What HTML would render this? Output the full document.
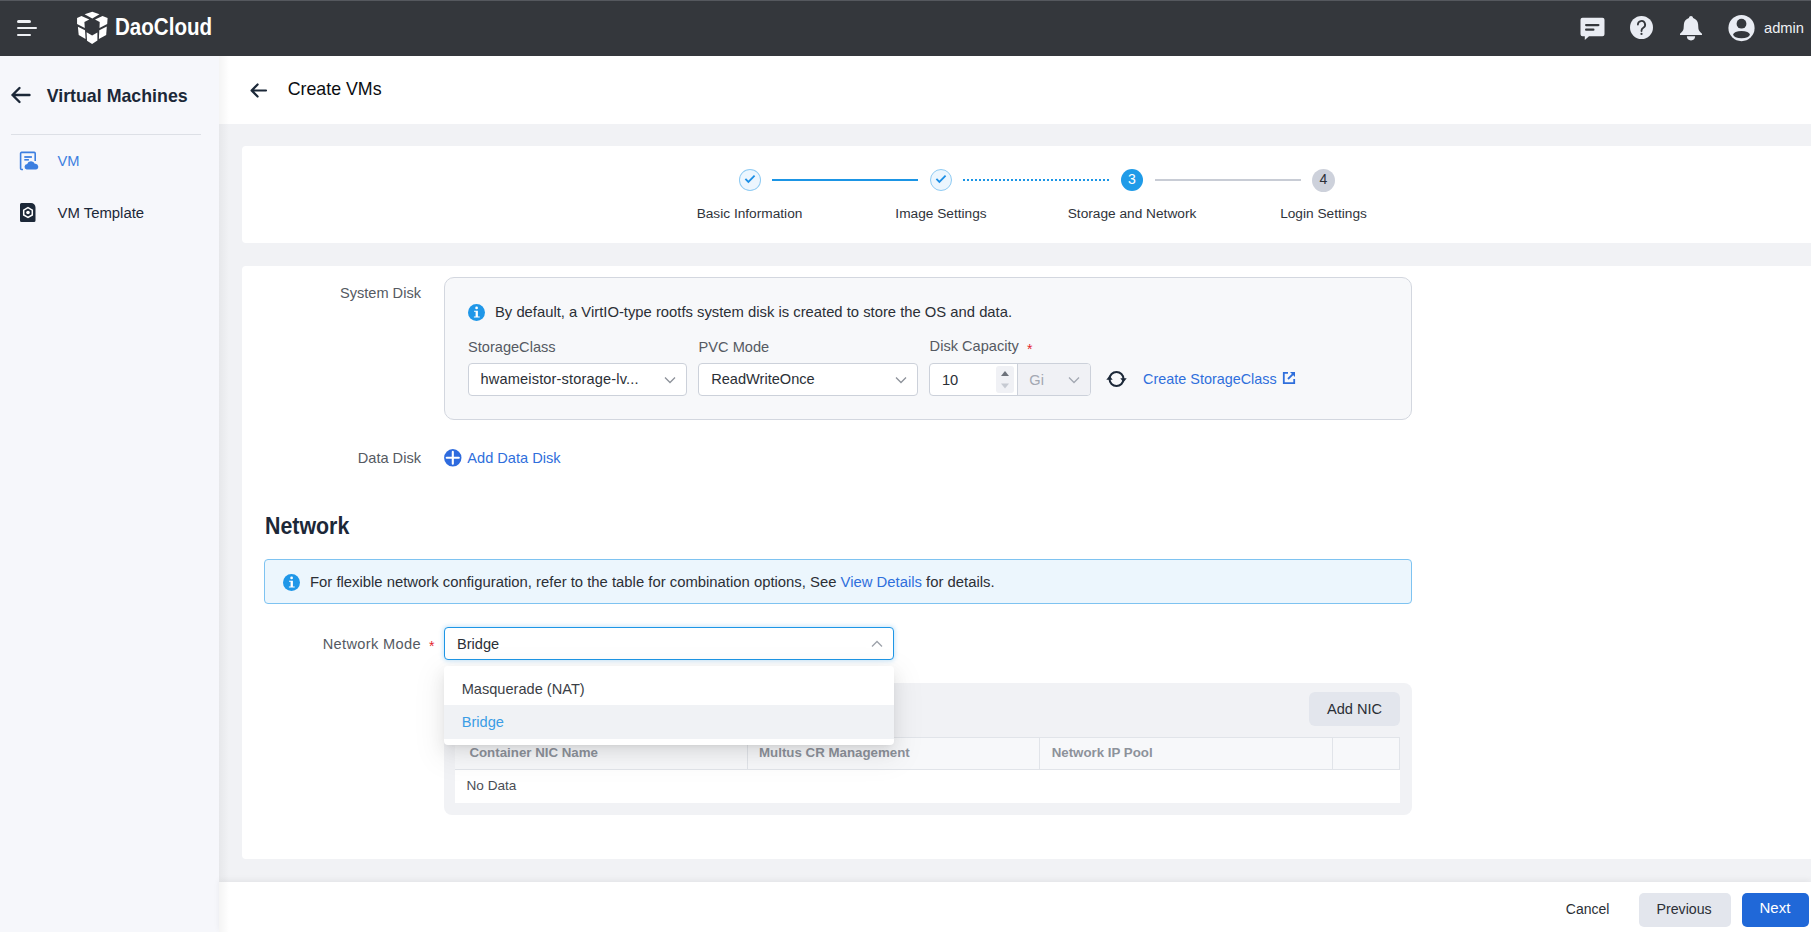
<!DOCTYPE html>
<html><head><meta charset="utf-8">
<style>
*{box-sizing:border-box;margin:0;padding:0}
html,body{width:1811px;height:932px;overflow:hidden;background:#f1f2f5;font-family:"Liberation Sans",sans-serif;}
.a{position:absolute}
.t{position:absolute;white-space:nowrap;line-height:1}
#hdr{left:0;top:0;width:1811px;height:56px;background:#34373c;border-top:1px solid #55585e}
#side{left:0;top:56px;width:219px;height:876px;background:#f6f7fb}
#sideshadow{left:219px;top:56px;width:10px;height:876px;background:linear-gradient(90deg,rgba(0,0,0,0.045),rgba(0,0,0,0))}
#phdr{left:219px;top:56px;width:1592px;height:68px;background:#fff}
.card{position:absolute;background:#fff;border-radius:4px}
</style></head><body>
<!-- header -->
<div id="hdr" class="a"></div>
<div class="a" style="left:17px;top:20px;width:14px;height:3px;border-radius:2px;background:#eef0f4"></div>
<div class="a" style="left:17px;top:27px;width:20px;height:2px;border-radius:1px;background:#eef0f4"></div>
<div class="a" style="left:17px;top:34px;width:14px;height:2px;border-radius:1px;background:#eef0f4"></div>
<svg class="a" style="left:74px;top:9px" width="38" height="38" viewBox="0 0 38 38">
  <g fill="#fff">
    <polygon points="18.3,2.65 25.5,5.3 18.3,9.4 10.6,5.3"/>
    <polygon points="3.06,8.97 7.5,6.9 15.3,10.4 10.4,13 10.8,19 3.06,15.1"/>
    <polygon points="33.6,9 28.5,6.9 21,10.4 25.7,13 25.5,19 33.2,15.1"/>
    <polygon points="3.9,17.7 11,21.2 11.6,30 4.7,26.1"/>
    <polygon points="32.8,17.5 25.3,21.2 24.9,30 32.2,26.1"/>
    <polygon points="12.6,23.2 18.1,26.5 23.4,23.4 23.4,31.6 18.1,35 13,31.8"/>
  </g>
</svg>
<div class="t" style="left:115px;top:14.9px;font-size:24.6px;font-weight:bold;color:#fff;transform:scaleX(0.836);transform-origin:0 0">DaoCloud</div>
<!-- right icons -->
<svg class="a" style="left:1579px;top:16px" width="27" height="25" viewBox="0 0 27 25">
  <path d="M3.5 1.8h20a2 2 0 0 1 2 2v14.4a2 2 0 0 1-2 2H10l-4.2 3.8v-3.8H3.5a2 2 0 0 1-2-2V3.8a2 2 0 0 1 2-2z" fill="#e9ecf3"/>
  <rect x="6" y="8" width="14.5" height="2.2" rx="1.1" fill="#34373c"/>
  <rect x="6" y="12.6" width="9.5" height="2.2" rx="1.1" fill="#34373c"/>
</svg>
<svg class="a" style="left:1629px;top:15px" width="25" height="25" viewBox="0 0 25 25">
  <circle cx="12.5" cy="12.5" r="11.5" fill="#e9ecf3"/>
  <path d="M8.9 9.6a3.6 3.6 0 1 1 5.4 3.1c-1.1.7-1.8 1.3-1.8 2.7v.6" fill="none" stroke="#34373c" stroke-width="1.8" stroke-linecap="round"/>
  <circle cx="12.5" cy="18.9" r="1.1" fill="#34373c"/>
</svg>
<svg class="a" style="left:1679px;top:15px" width="24" height="26" viewBox="0 0 24 26">
  <path d="M12 0.9C10.8 0.9 10.1 1.8 9.9 3C7.2 3.9 5.1 6.2 4.9 9.2L4.6 13.6C4.4 15.7 2.9 17.3 1 18.8V20H23V18.8C21.1 17.3 19.6 15.7 19.4 13.6L19.1 9.2C18.9 6.2 16.8 3.9 14.1 3C13.9 1.8 13.2 0.9 12 0.9Z" fill="#e9ecf3"/>
  <path d="M7.9 21.3H16.1A4.1 4.1 0 0 1 7.9 21.3Z" fill="#e9ecf3"/>
</svg>
<svg class="a" style="left:1728px;top:15px" width="28" height="28" viewBox="0 0 28 28">
  <circle cx="13.5" cy="13.1" r="13.1" fill="#e9ecf3"/>
  <circle cx="13.5" cy="8.7" r="4.9" fill="#34373c"/>
  <ellipse cx="13.5" cy="19.6" rx="8.3" ry="3.6" fill="#34373c"/>
</svg>
<div class="t" style="left:1764px;top:21.4px;font-size:14.7px;color:#eef0f4">admin</div>

<!-- sidebar -->
<div id="side" class="a"></div>
<svg class="a" style="left:10px;top:86px" width="21" height="18" viewBox="0 0 21 18">
  <path d="M19.5 9H2.5M9.5 2 2.5 9l7 7" fill="none" stroke="#1c2838" stroke-width="2.4" stroke-linecap="round" stroke-linejoin="round"/>
</svg>
<div class="t" style="left:46.7px;top:87.5px;font-size:17.8px;font-weight:bold;color:#1c2838">Virtual Machines</div>
<div class="a" style="left:11px;top:134px;width:190px;height:1px;background:#dde0e6"></div>
<svg class="a" style="left:19px;top:151px" width="20" height="20" viewBox="0 0 20 20">
  <path d="M4 18.5H2.6a1 1 0 0 1-1-1V2.4a1 1 0 0 1 1-1h12.6a1 1 0 0 1 1 1V10" fill="none" stroke="#3d7fe0" stroke-width="1.6"/>
  <rect x="5.3" y="5.1" width="7.6" height="1.8" fill="#3d7fe0"/>
  <rect x="5.3" y="8" width="4.6" height="1.6" fill="#3d7fe0"/>
  <path d="M7.6 18.6a2.8 2.8 0 0 1 .6-5.5 4 4 0 0 1 7.6-.4 2.9 2.9 0 0 1 .9 5.9z" fill="#3d7fe0"/>
</svg>
<div class="t" style="left:57.5px;top:153.8px;font-size:14.7px;color:#3d7fe0">VM</div>
<svg class="a" style="left:20px;top:203px" width="16" height="19" viewBox="0 0 16 19">
  <path d="M1.5 0h9.5a4.5 4.5 0 0 1 4.5 4.5V17.5a1.5 1.5 0 0 1-1.5 1.5H1.5A1.5 1.5 0 0 1 0 17.5V1.5A1.5 1.5 0 0 1 1.5 0z" fill="#1c2838"/>
  <polygon points="8,4.6 12.3,7.1 12.3,12 8,14.5 3.7,12 3.7,7.1" fill="none" stroke="#fff" stroke-width="1.5"/>
  <circle cx="8" cy="9.55" r="1.8" fill="#fff"/>
</svg>
<div class="t" style="left:57.5px;top:205.8px;font-size:14.9px;color:#1c2838">VM Template</div>

<!-- page header -->
<div id="phdr" class="a"></div>
<svg class="a" style="left:249px;top:82px" width="19" height="17" viewBox="0 0 19 17">
  <path d="M17 8.5H3M8.6 2.5 2.6 8.5l6 6" fill="none" stroke="#1c2838" stroke-width="2.2" stroke-linecap="round" stroke-linejoin="round"/>
</svg>
<div class="t" style="left:287.7px;top:81px;font-size:17.8px;color:#0b0d10">Create VMs</div>


<!-- stepper card -->
<div class="card" style="left:242px;top:146px;width:1600px;height:97px"></div>
<div class="a" style="left:738.5px;top:169px;width:22.5px;height:22px;border-radius:50%;border:1px solid #8fcbf3;background:#ecf6fe"></div>
<div class="a" style="left:930px;top:169px;width:22px;height:22px;border-radius:50%;border:1px solid #8fcbf3;background:#ecf6fe"></div>
<svg class="a" style="left:744px;top:174px" width="12" height="10" viewBox="0 0 12 10"><path d="M1.4 4.8 4.4 7.9 10.6 1.7" fill="none" stroke="#1c8fe6" stroke-width="1.8"/></svg>
<svg class="a" style="left:935px;top:174px" width="12" height="10" viewBox="0 0 12 10"><path d="M1.4 4.8 4.4 7.9 10.6 1.7" fill="none" stroke="#1c8fe6" stroke-width="1.8"/></svg>
<div class="a" style="left:772px;top:179px;width:146px;height:2px;background:#1b95e5"></div>
<div class="a" style="left:963px;top:179px;width:148px;height:2px;background:repeating-linear-gradient(90deg,#1b95e5 0 2px,transparent 2px 4px)"></div>
<div class="a" style="left:1121px;top:169px;width:22px;height:22px;border-radius:50%;background:#1f9be8"></div>
<div class="t" style="left:1121px;top:172.3px;width:22px;text-align:center;font-size:14px;color:#fff">3</div>
<div class="a" style="left:1155px;top:179px;width:146px;height:2px;background:#c8ccd5"></div>
<div class="a" style="left:1312px;top:169px;width:23px;height:23px;border-radius:50%;background:#cdd1db"></div>
<div class="t" style="left:1312px;top:172.3px;width:23px;text-align:center;font-size:14px;color:#2b2f36">4</div>
<div class="t" style="left:649.5px;top:207.2px;width:200px;text-align:center;font-size:13.7px;color:#2f333a">Basic Information</div>
<div class="t" style="left:841px;top:207.2px;width:200px;text-align:center;font-size:13.7px;color:#2f333a">Image Settings</div>
<div class="t" style="left:1032px;top:207.2px;width:200px;text-align:center;font-size:13.7px;color:#2f333a">Storage and Network</div>
<div class="t" style="left:1223.5px;top:207.2px;width:200px;text-align:center;font-size:13.7px;color:#2f333a">Login Settings</div>

<!-- form card -->
<div class="card" style="left:242px;top:266px;width:1600px;height:593px"></div>
<div class="t" style="left:221px;top:285.9px;width:200px;text-align:right;font-size:14.6px;color:#555a62">System Disk</div>
<div class="a" style="left:444px;top:277px;width:968px;height:143px;border-radius:10px;border:1px solid #d3d7df;background:#f7f8fa"></div>
<svg class="a" style="left:468px;top:303.5px" width="17" height="17" viewBox="0 0 17 17"><circle cx="8.5" cy="8.5" r="8.5" fill="#1f97e8"/><circle cx="8.6" cy="3.9" r="1.35" fill="#fff"/><path d="M6 6.7H9.9V12.5H11.7V13.6H5.9V12.5H7.6V7.8H6Z" fill="#fff"/></svg>
<div class="t" style="left:495px;top:305.2px;font-size:14.8px;color:#2b2f36">By default, a VirtIO-type rootfs system disk is created to store the OS and data.</div>
<div class="t" style="left:468px;top:339.6px;font-size:14.6px;color:#555a62">StorageClass</div>
<div class="t" style="left:698.6px;top:339.6px;font-size:14.6px;color:#555a62">PVC Mode</div>
<div class="t" style="left:929.6px;top:339.3px;font-size:14.6px;color:#555a62">Disk Capacity</div>
<div class="t" style="left:1027px;top:342px;font-size:14px;color:#e3252d">*</div>
<div class="a" style="left:468px;top:363px;width:219px;height:33px;border-radius:4px;border:1px solid #ccd1da;background:#fff"></div>
<div class="t" style="left:480.5px;top:372px;font-size:14.6px;color:#2b2f36;letter-spacing:0.15px">hwameistor-storage-lv...</div>
<svg class="a" style="left:664px;top:376px" width="12" height="8" viewBox="0 0 12 8"><path d="M1 1.5 6 6.5 11 1.5" fill="none" stroke="#8d929a" stroke-width="1.3"/></svg>
<div class="a" style="left:698px;top:363px;width:220px;height:33px;border-radius:4px;border:1px solid #ccd1da;background:#fff"></div>
<div class="t" style="left:711.2px;top:372px;font-size:14.6px;color:#2b2f36">ReadWriteOnce</div>
<svg class="a" style="left:895px;top:376px" width="12" height="8" viewBox="0 0 12 8"><path d="M1 1.5 6 6.5 11 1.5" fill="none" stroke="#8d929a" stroke-width="1.3"/></svg>
<div class="a" style="left:929px;top:363px;width:162px;height:33px;border-radius:4px;border:1px solid #ccd1da;background:#fff;overflow:hidden">
  <div class="a" style="left:87px;top:0;width:74px;height:31px;background:#f0f1f5;border-left:1px solid #ccd1da"></div>
  <div class="a" style="left:66px;top:2px;width:18px;height:27px;background:#f0f1f5;border-radius:3px"></div>
</div>
<svg class="a" style="left:1000px;top:370px" width="10" height="20" viewBox="0 0 10 20"><path d="M1 6h8L5 1z" fill="#6d727b"/><path d="M1 13.5h8L5 18.5z" fill="#c6cad2"/></svg>
<div class="t" style="left:941.9px;top:372.8px;font-size:14.7px;color:#2b2f36">10</div>
<div class="t" style="left:1029.3px;top:372.8px;font-size:14.6px;color:#a3a8b2">Gi</div>
<svg class="a" style="left:1068px;top:376px" width="12" height="8" viewBox="0 0 12 8"><path d="M1 1.5 6 6.5 11 1.5" fill="none" stroke="#a3a8b2" stroke-width="1.3"/></svg>
<svg class="a" style="left:1105px;top:369px" width="23" height="20" viewBox="0 0 23 20"><path d="M4.5 10A7 7 0 0 1 18.5 10M18.5 10A7 7 0 0 1 4.5 10" fill="none" stroke="#1c2838" stroke-width="2"/><path d="M15.3 9.3h6.4l-3.2 4z" fill="#1c2838"/><path d="M1.3 10.7h6.4l-3.2-4z" fill="#1c2838"/></svg>
<div class="t" style="left:1143.1px;top:371.6px;font-size:14.4px;color:#2f6fdc">Create StorageClass</div>
<svg class="a" style="left:1282px;top:371px" width="14" height="14" viewBox="0 0 14 14"><path d="M6 1.8H1.8v10.4h10.4V8" fill="none" stroke="#2f6fdc" stroke-width="1.8"/><path d="M8 1h5v5z" fill="#2f6fdc"/><path d="M6 8 12.2 1.8" stroke="#2f6fdc" stroke-width="1.8"/></svg>

<div class="t" style="left:221px;top:450.9px;width:200px;text-align:right;font-size:14.6px;color:#555a62">Data Disk</div>
<svg class="a" style="left:444.2px;top:449.3px" width="18" height="18" viewBox="0 0 18 18"><circle cx="8.8" cy="8.8" r="8.7" fill="#2e6bde"/><path d="M8.8 2.9v11.8M2.7 8.8h12.1" stroke="#fff" stroke-width="2.1" stroke-linecap="round"/></svg>
<div class="t" style="left:467.3px;top:451.4px;font-size:14.6px;color:#2f6fdc">Add Data Disk</div>

<div class="t" style="left:265px;top:513.7px;font-size:24px;font-weight:bold;color:#1c2838;transform:scaleX(0.89);transform-origin:0 0">Network</div>
<div class="a" style="left:264px;top:559px;width:1148px;height:45px;border-radius:4px;border:1px solid #7ec3f1;background:#ecf6fd"></div>
<svg class="a" style="left:283px;top:573.5px" width="17" height="17" viewBox="0 0 17 17"><circle cx="8.5" cy="8.5" r="8.5" fill="#1f97e8"/><circle cx="8.6" cy="3.9" r="1.35" fill="#fff"/><path d="M6 6.7H9.9V12.5H11.7V13.6H5.9V12.5H7.6V7.8H6Z" fill="#fff"/></svg>
<div class="t" style="left:310px;top:575.2px;font-size:14.85px;color:#2b2f36">For flexible network configuration, refer to the table for combination options, See <span style="color:#2f6fdc">View Details</span> for details.</div>

<div class="t" style="left:221px;top:636.8px;width:200px;text-align:right;font-size:14.6px;color:#555a62;letter-spacing:0.35px">Network Mode</div>
<div class="t" style="left:429px;top:638.6px;font-size:14px;color:#e3252d">*</div>
<div class="a" style="left:444px;top:627px;width:450px;height:33px;border-radius:4px;border:1px solid #1e96e6;background:#fff;box-shadow:0 0 4px 1px rgba(30,150,230,0.25)"></div>
<div class="t" style="left:457px;top:636.8px;font-size:14.6px;color:#2b2f36">Bridge</div>
<svg class="a" style="left:871px;top:640px" width="12" height="8" viewBox="0 0 12 8"><path d="M1 6.5 6 1.5 11 6.5" fill="none" stroke="#9da2aa" stroke-width="1.3"/></svg>

<!-- NIC panel -->
<div class="a" style="left:444px;top:683px;width:968px;height:132px;border-radius:8px;background:#f1f2f5"></div>
<div class="a" style="left:1309px;top:692px;width:91px;height:34px;border-radius:6px;background:#e3e6ed"></div>
<div class="t" style="left:1327px;top:702.3px;font-size:14.6px;color:#2b2f36">Add NIC</div>
<div class="a" style="left:455px;top:737px;width:945px;height:33px;background:#f7f8fa;border:1px solid #e1e4e9;border-left:none"></div>
<div class="a" style="left:747px;top:737px;width:1px;height:33px;background:#e1e4e9"></div>
<div class="a" style="left:1039px;top:737px;width:1px;height:33px;background:#e1e4e9"></div>
<div class="a" style="left:1332px;top:737px;width:1px;height:33px;background:#e1e4e9"></div>
<div class="a" style="left:455px;top:770px;width:945px;height:33px;background:#fff"></div>
<div class="t" style="left:469.4px;top:745.7px;font-size:13.3px;font-weight:bold;color:#8d929b">Container NIC Name</div>
<div class="t" style="left:759px;top:745.7px;font-size:13.3px;font-weight:bold;color:#8d929b">Multus CR Management</div>
<div class="t" style="left:1051.7px;top:745.7px;font-size:13.3px;font-weight:bold;color:#8d929b">Network IP Pool</div>
<div class="t" style="left:466.5px;top:779.2px;font-size:13.6px;color:#4a4e55">No Data</div>

<!-- dropdown -->
<div class="a" style="left:444px;top:666px;width:450px;height:78.5px;border-radius:4px;background:#fff;box-shadow:0 9px 28px 8px rgba(0,0,0,0.05),0 6px 16px 0 rgba(0,0,0,0.08),0 3px 6px -4px rgba(0,0,0,0.12);overflow:hidden">
  <div class="a" style="left:0;top:39px;width:450px;height:34px;background:#f0f2f5"></div>
</div>
<div class="t" style="left:461.7px;top:682px;font-size:14.6px;color:#3a3e45">Masquerade (NAT)</div>
<div class="t" style="left:461.7px;top:714.6px;font-size:14.6px;color:#3b9de5">Bridge</div>

<!-- footer -->
<div class="a" style="left:219px;top:882px;width:1592px;height:50px;background:#fff;box-shadow:0 -2px 6px rgba(0,0,0,0.06)"></div>
<div class="t" style="left:1565.8px;top:901.7px;font-size:14px;color:#2b2f36">Cancel</div>
<div class="a" style="left:1639px;top:893px;width:92px;height:34px;border-radius:5px;background:#e3e6ed"></div>
<div class="t" style="left:1656.5px;top:901.7px;font-size:14.2px;color:#2b2f36">Previous</div>
<div class="a" style="left:1742px;top:893px;width:67px;height:34px;border-radius:5px;background:#2068d8"></div>
<div class="t" style="left:1759.5px;top:900px;font-size:15px;color:#fff">Next</div>

<div id="sideshadow" class="a"></div>
</body></html>
